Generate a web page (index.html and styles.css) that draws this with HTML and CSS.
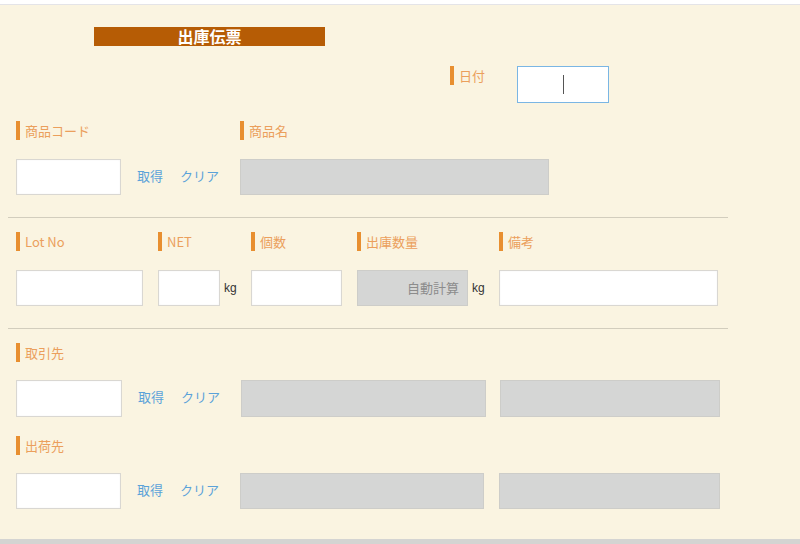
FILE: index.html
```html
<!DOCTYPE html>
<html lang="ja">
<head>
<meta charset="utf-8">
<title>出庫伝票</title>
<link rel="stylesheet" href="styles.css">
</head>
<body>
<div class="topbar"></div>
<main class="sheet">
  <div class="title-row"><h1 class="title">出庫伝票</h1></div>

  <div class="date-row">
    <span class="label">日付</span>
    <div class="input date"><span class="caret"></span></div>
  </div>

  <section class="row row-goods">
    <div class="col col-code">
      <span class="label">商品コード</span>
      <div class="controls">
        <div class="input w105"></div>
        <a class="link first">取得</a>
        <a class="link">クリア</a>
      </div>
    </div>
    <div class="col">
      <span class="label">商品名</span>
      <div class="controls">
        <div class="box w309"></div>
      </div>
    </div>
  </section>

  <hr class="divider">

  <section class="row row-lot">
    <div class="col col-lot">
      <span class="label">Lot No</span>
      <div class="controls"><div class="input w127"></div></div>
    </div>
    <div class="col col-net">
      <span class="label">NET</span>
      <div class="controls"><div class="input w62"></div><span class="unit">kg</span></div>
    </div>
    <div class="col col-qty">
      <span class="label">個数</span>
      <div class="controls"><div class="input w91"></div></div>
    </div>
    <div class="col col-out">
      <span class="label">出庫数量</span>
      <div class="controls"><div class="box w111 auto">自動計算</div><span class="unit">kg</span></div>
    </div>
    <div class="col">
      <span class="label">備考</span>
      <div class="controls"><div class="input w219"></div></div>
    </div>
  </section>

  <hr class="divider">

  <section class="row row-partner">
    <div class="col">
      <span class="label">取引先</span>
      <div class="controls tall">
        <div class="input w106"></div>
        <a class="link first">取得</a>
        <a class="link">クリア</a>
        <div class="box w245 name1"></div>
        <div class="box w220 name2"></div>
      </div>
    </div>
  </section>

  <section class="row row-ship">
    <div class="col">
      <span class="label">出荷先</span>
      <div class="controls">
        <div class="input w105"></div>
        <a class="link first">取得</a>
        <a class="link">クリア</a>
        <div class="box w244 name1b"></div>
        <div class="box w221 name2b"></div>
      </div>
    </div>
  </section>
</main>
<div class="footer"></div>
</body>
</html>
```

FILE: styles.css
```css
* { box-sizing: border-box; }

html, body {
  margin: 0;
  padding: 0;
}

body {
  width: 800px;
  height: 544px;
  overflow: hidden;
  background: #faf4e1;
  font-family: "Noto Sans CJK JP", "Noto Sans", "Liberation Sans", sans-serif;
  font-size: 13px;
  color: #333;
}

.topbar {
  height: 5px;
  background: #ffffff;
  border-bottom: 1px solid #e4e4e8;
}

.sheet {
  height: 534px;
  background: #faf4e1;
  overflow: hidden;
}

.title-row {
  padding: 22px 0 0 94px;
}

.title {
  margin: 0;
  width: 231px;
  height: 19px;
  background: #b65c05;
  color: #ffffff;
  font-size: 16px;
  font-weight: bold;
  line-height: 18px;
  text-align: center;
}

.date-row {
  display: flex;
  align-items: flex-start;
  margin-top: 20px;
  padding-left: 450px;
  height: 37px;
}

.date-row .label {
  width: 67px;
}

.label {
  display: flex;
  align-items: center;
  height: 19px;
  border-left: 4px solid #e88f30;
  padding-left: 5px;
  color: #eb9f5c;
  font-size: 13px;
  line-height: 18px;
  white-space: nowrap;
}

.input {
  height: 36px;
  background: #ffffff;
  border: 1px solid #d9d7d2;
  box-shadow: inset 0 0 2px rgba(0, 0, 0, 0.06);
}

.input.date {
  width: 92px;
  height: 37px;
  border: 1px solid #7ab6e4;
  display: flex;
  justify-content: center;
  align-items: center;
  box-shadow: none;
}

.caret {
  display: block;
  width: 1px;
  height: 19px;
  background: #555;
  margin-top: -1px;
}

.box {
  height: 36px;
  background: #d5d6d5;
  border: 1px solid #cdcdc9;
}

.box.auto {
  color: #8c8c8c;
  text-align: right;
  padding-right: 8px;
  line-height: 33px;
}

.row {
  display: flex;
  padding-left: 16px;
}

.row-goods { margin-top: 18px; }
.row-lot { margin-top: 14px; }
.row-partner { margin-top: 14px; }
.row-ship { margin-top: 19px; }

.col {
  display: flex;
  flex-direction: column;
  gap: 19px;
}

.row-partner .col, .row-ship .col { gap: 18px; }

.col-code { width: 224px; }
.col-lot { width: 142px; }
.col-net { width: 93px; }
.col-qty { width: 106px; }
.col-out { width: 142px; }

.controls {
  display: flex;
  align-items: center;
}

.controls.tall .input,
.controls.tall .box { height: 37px; }

.link {
  color: #5ba2d9;
  font-size: 13px;
  line-height: 16px;
  margin-top: -3px;
  text-decoration: none;
  cursor: pointer;
  margin-left: 17px;
}

.link.first { margin-left: 16px; }

.unit {
  margin-left: 4px;
  font-size: 12px;
  color: #333;
  font-family: "Liberation Sans", "Noto Sans", sans-serif;
}

.w62 { width: 62px; }
.w91 { width: 91px; }
.w105 { width: 105px; }
.w106 { width: 106px; }
.w111 { width: 111px; }
.w127 { width: 127px; }
.w219 { width: 219px; }
.w220 { width: 220px; }
.w221 { width: 221px; }
.w244 { width: 244px; }
.w245 { width: 245px; }
.w309 { width: 309px; }

.name1 { margin-left: 21px; }
.name2 { margin-left: 14px; }
.name1b { margin-left: 21px; }
.name2b { margin-left: 15px; }

.divider {
  margin: 22px 0 0 8px;
  width: 720px;
  height: 0;
  border: 0;
  border-top: 1px solid #d2cdbd;
}

.footer {
  height: 5px;
  background: #d4d4d2;
}
```
